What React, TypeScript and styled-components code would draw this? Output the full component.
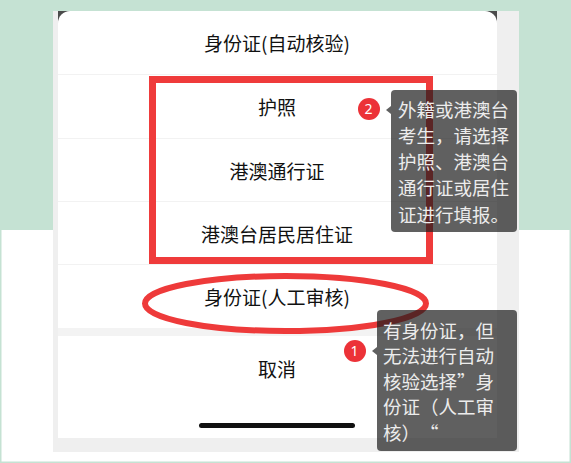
import React from "react";
import styled, { createGlobalStyle } from "styled-components";

const GlobalStyle = createGlobalStyle`
    html, body {
        margin: 0;
        padding: 0;
        background: #fff;
    }
    body {
        font-family: "Noto Sans CJK SC", "Noto Sans", sans-serif;
    }
`;

const Page = styled.div`
    position: relative;
    width: 571px;
    height: 463px;
    overflow: hidden;
    box-sizing: border-box;
    padding-top: 11px;
    background: linear-gradient(to bottom, #c5e2d3 0 230px, #fff 230px);
    box-shadow: inset 0 0 0 1.5px #c5e2d3;
`;

const Shot = styled.div`
    width: 466px;
    height: 441px;
    margin: 0 auto;
    box-sizing: border-box;
    padding: 0 22px 14px 5px;
    background: #efefef;
`;

const Backdrop = styled.div`
    height: 100%;
    background: linear-gradient(to bottom, #4b4b4b 0 14px, #efefef 14px);
`;

const Sheet = styled.div`
    height: 100%;
    display: flex;
    flex-direction: column;
    background: #fff;
    border-radius: 12px 12px 0 0;
    overflow: hidden;
`;

const Option = styled.div<{ $h: number; $line?: boolean }>`
    flex: none;
    height: ${(p) => p.$h}px;
    display: flex;
    align-items: center;
    justify-content: center;
    box-sizing: border-box;
    font-size: 19px;
    color: #111;
    border-bottom: ${(p) => (p.$line ? "1px solid #f2f2f2" : "none")};
`;

const Gap = styled.div`
    flex: none;
    height: 8px;
    background: #f3f3f3;
`;

const HomeArea = styled.div`
    flex: 1;
    display: flex;
    justify-content: center;
    padding-top: 23px;
`;

const HomeBar = styled.div`
    width: 156px;
    height: 5px;
    border-radius: 3px;
    background: #111;
`;

const RedBox = styled.div`
    position: absolute;
    left: 149px;
    top: 76px;
    width: 284px;
    height: 188px;
    box-sizing: border-box;
    border: 7.5px solid #ef3b3b;
`;

const Ring = styled.svg`
    position: absolute;
    left: 140px;
    top: 270px;
    overflow: visible;
`;

const Badge = styled.div<{ $x: number; $y: number }>`
    position: absolute;
    left: ${(p) => p.$x - 11}px;
    top: ${(p) => p.$y - 11}px;
    width: 22px;
    height: 22px;
    border-radius: 50%;
    background: #ec3238;
    color: #fff;
    font-family: "Noto Sans", sans-serif;
    font-size: 14px;
    line-height: 22px;
    text-align: center;
`;

const Tip = styled.div<{ $x: number; $y: number; $w: number; $lh: number; $pad: string; $arrow: number }>`
    position: absolute;
    left: ${(p) => p.$x}px;
    top: ${(p) => p.$y}px;
    width: ${(p) => p.$w}px;
    box-sizing: border-box;
    padding: ${(p) => p.$pad};
    border-radius: 4px;
    background: rgba(28, 28, 28, 0.7);
    color: #ececec;
    font-size: 18.5px;
    line-height: ${(p) => p.$lh}px;

    &::before {
        content: '';
        position: absolute;
        left: -5px;
        top: ${(p) => p.$arrow}px;
        border-style: solid;
        border-width: 4.5px 5px 4.5px 0;
        border-color: transparent rgba(28, 28, 28, 0.7) transparent transparent;
    }
`;

const TipLine = styled.span`
    display: block;
    white-space: nowrap;
`;

// full-width quote mark: the glyph sits at one side of a 1em cell
const Quote = styled.span<{ $side: "left" | "right" }>`
    display: inline-block;
    width: 1em;
    text-align: ${(p) => p.$side};
`;

const tipTwo = ["外籍或港澳台", "考生，请选择", "护照、港澳台", "通行证或居住", "证进行填报。"];

const App: React.FC = () => {
    return (
        <Page>
            <GlobalStyle />
            <Shot>
                <Backdrop>
                    <Sheet>
                        <Option $h={64} $line>身份证(自动核验)</Option>
                        <Option $h={64} $line>护照</Option>
                        <Option $h={63} $line>港澳通行证</Option>
                        <Option $h={63} $line>港澳台居民居住证</Option>
                        <Option $h={63}>身份证(人工审核)</Option>
                        <Gap />
                        <Option $h={64}>取消</Option>
                        <HomeArea>
                            <HomeBar />
                        </HomeArea>
                    </Sheet>
                </Backdrop>
            </Shot>

            <RedBox />
            <Ring width="292" height="68" viewBox="0 0 292 68">
                <ellipse cx="145.5" cy="33.5" rx="140.5" ry="27.5" fill="none" stroke="#ee3a3a" strokeWidth="6" />
            </Ring>

            <Badge $x={368.5} $y={109}>2</Badge>
            <Tip $x={391} $y={89.5} $w={126} $lh={26.3} $pad="6px 7px 5px" $arrow={16}>
                {tipTwo.map((t) => (
                    <TipLine key={t}>{t}</TipLine>
                ))}
            </Tip>

            <Badge $x={354.5} $y={351}>1</Badge>
            <Tip $x={377} $y={309.5} $w={140} $lh={25.5} $pad="8px 6px 6px" $arrow={37}>
                <TipLine>有身份证，但</TipLine>
                <TipLine>无法进行自动</TipLine>
                <TipLine>核验选择<Quote $side="left">”</Quote>身</TipLine>
                <TipLine>份证（人工审</TipLine>
                <TipLine>核）<Quote $side="right">“</Quote></TipLine>
            </Tip>
        </Page>
    );
};

export default App;
